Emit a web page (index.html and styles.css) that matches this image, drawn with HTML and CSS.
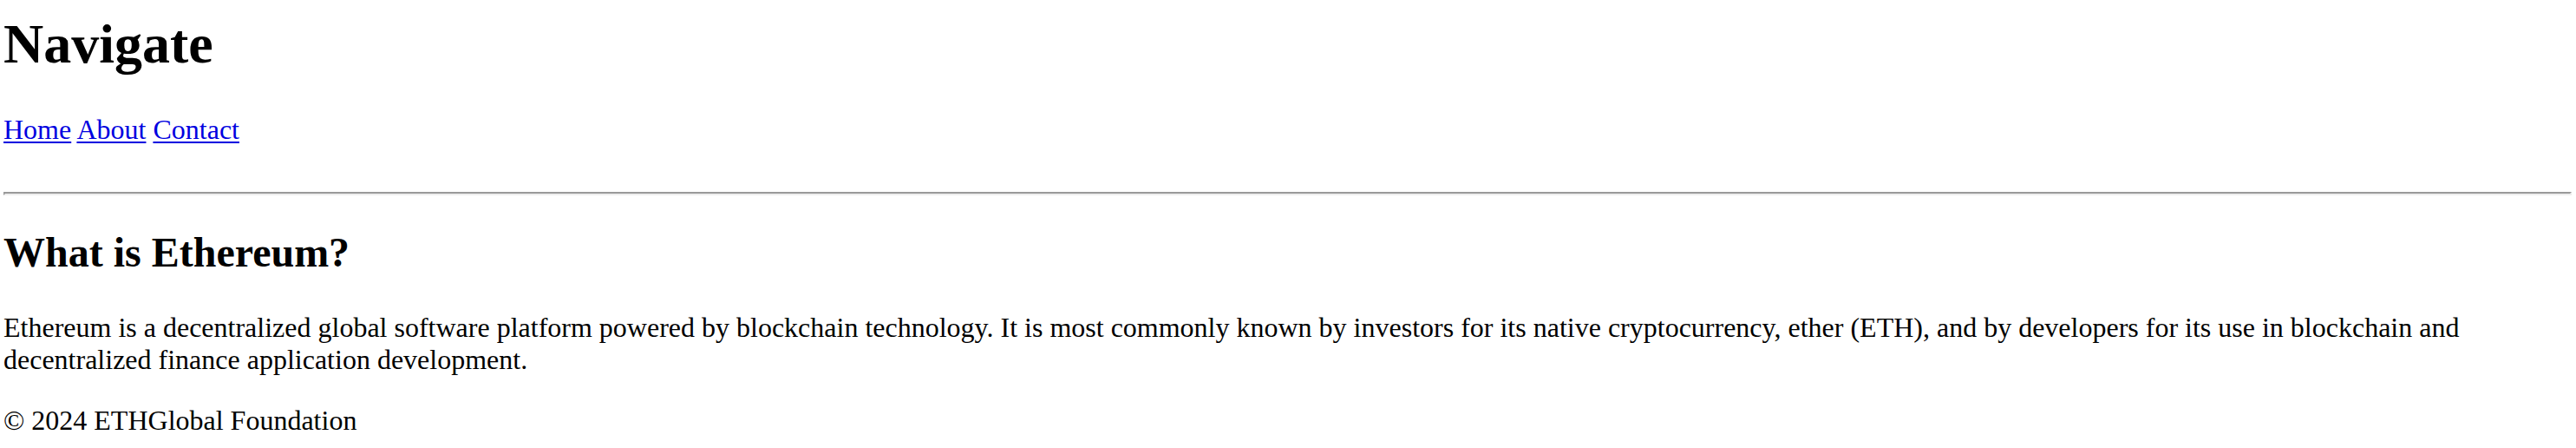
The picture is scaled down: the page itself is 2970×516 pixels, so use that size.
FILE: index.html
```html
<!DOCTYPE html>
<html lang="en">
<head>
<meta charset="utf-8">
<title>ETHGlobal Foundation</title>
<link rel="stylesheet" href="styles.css">
</head>
<body class="page">
  <header class="site-header">
    <h1 class="site-title">Navigate</h1>
    <nav class="site-nav">
      <a class="nav-link" href="#">Home</a>
      <a class="nav-link" href="#">About</a>
      <a class="nav-link" href="#">Contact</a>
    </nav>
  </header>
  <hr class="divider">
  <main class="content">
    <h2 class="section-title">What is Ethereum?</h2>
    <p class="section-text">Ethereum is a decentralized global software platform powered by blockchain technology. It is most commonly known by investors for its native cryptocurrency, ether (ETH), and by developers for its use in blockchain and decentralized finance application development.</p>
  </main>
  <footer class="site-footer">© 2024 ETHGlobal Foundation</footer>
</body>
</html>
```

FILE: styles.css
```css
html, body {
  background: #ffffff;
}

.page {
  margin: 0 5px 0 4px;
  padding-top: 14px;
  font-family: "Liberation Serif", "Times New Roman", serif;
  font-size: 32px;
  line-height: normal;
  color: #000000;
}

.site-title {
  margin: 0 0 43px 0;
  font-size: 64px;
  font-weight: bold;
  line-height: normal;
}

.site-nav {
  margin: 0;
}

.nav-link {
  color: #0000e0;
  text-decoration: underline;
  text-decoration-thickness: 2px;
  text-underline-offset: 3px;
}

.divider {
  margin: 53px 0 0 0;
  height: 0;
  border-style: solid;
  border-width: 2px;
  border-color: #9a9a9a #eeeeee #eeeeee #9a9a9a;
}

.content {
  display: block;
}

.section-title {
  margin: 38px 0 41px 0;
  font-size: 48px;
  font-weight: bold;
  line-height: normal;
}

.section-text {
  margin: 0 0 33px 0;
}

.site-footer {
  margin: 0;
}
```
